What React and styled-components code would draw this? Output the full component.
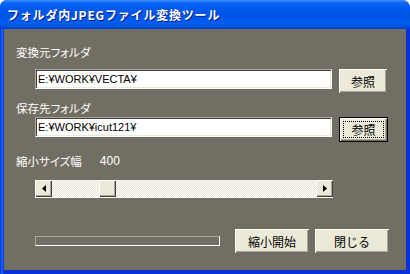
import React from 'react';
import styled, { createGlobalStyle } from 'styled-components';

const GlobalStyle = createGlobalStyle`
  html, body {
    margin: 0;
    padding: 0;
    background: #ffffff;
  }
`;

const jp = `'Noto Sans CJK JP', 'Noto Sans', sans-serif`;

const Window = styled.div`
  width: 410px;
  height: 274px;
  display: flex;
  flex-direction: column;
  box-sizing: border-box;
  background: #0831d9;
  border-radius: 7px 8px 0 0;
  overflow: hidden;
`;

const TitleBar = styled.div`
  height: 29px;
  flex: none;
  display: flex;
  align-items: center;
  padding-left: 7px;
  box-sizing: border-box;
  background: linear-gradient(
    to bottom,
    #3d8fff 0%,
    #0a66f8 10%,
    #005af0 25%,
    #0055e6 55%,
    #005ef4 80%,
    #0050de 92%,
    #003cc0 100%
  );
`;

const Title = styled.span`
  font-family: ${jp};
  font-size: 12px;
  font-weight: 700;
  color: #ffffff;
  text-shadow: 1px 1px 0 #0a1e8a;
  letter-spacing: 0.8px;
`;

const Frame = styled.div`
  flex: 1;
  display: flex;
  padding: 0 4px 4px 4px;
  background: linear-gradient(to right, #0831d9, #166aee 2px, #0831d9 4px);
`;

const Client = styled.div`
  flex: 1;
  display: flex;
  flex-direction: column;
  background: #716f64;
  padding-left: 12px;
`;

const Label = styled.div`
  margin-top: ${(p) => p.$top}px;
  height: 16px;
  display: flex;
  align-items: center;
  gap: 18px;
  font-family: ${jp};
  font-feature-settings: 'palt';
  font-size: 11.5px;
  color: #ffffff;
`;

const Value = styled.span`
  font-family: 'Liberation Sans', sans-serif;
  font-size: 12px;
`;

const FieldRow = styled.div`
  margin-top: ${(p) => p.$top}px;
  margin-left: 19px;
  display: flex;
  align-items: flex-start;
  gap: 7px;
`;

const TextBox = styled.div`
  width: 297px;
  height: 20px;
  box-sizing: border-box;
  background: #ffffff;
  border: 1px solid;
  border-color: #aca899 #ffffff #ffffff #aca899;
  box-shadow: inset 1px 1px 0 #404040, inset -1px -1px 0 #ece9d8;
  padding: 0 0 0 2px;
  display: flex;
  align-items: center;
  font-family: 'Liberation Sans', sans-serif;
  font-size: 11px;
  color: #000000;
`;

const Button = styled.button`
  width: ${(p) => p.$w}px;
  height: ${(p) => (p.$focused ? 25 : 24)}px;
  box-sizing: border-box;
  margin: 0;
  padding: 0;
  background: #ece9d8;
  border: ${(p) => (p.$focused ? '1px solid #000000' : 'none')};
  box-shadow: inset 1px 1px 0 #ffffff, inset -1px -1px 0 #716f64,
    inset -2px -2px 0 #aca899;
  font-family: ${jp};
  font-size: 12px;
  color: #000000;
  display: flex;
  align-items: center;
  justify-content: center;
  position: relative;
`;

const FocusRing = styled.span`
  position: absolute;
  inset: 3px;
  border: 1px dotted #000000;
`;

const ScrollBar = styled.div`
  margin-top: 11px;
  margin-left: 19px;
  width: 298px;
  height: 17px;
  display: flex;
  border-bottom: 1px solid #ffffff;
  background: repeating-conic-gradient(#ffffff 0 25%, #e4e1d2 0 50%) 0 0 / 2px 2px;
`;

const ScrollButton = styled.div`
  width: 17px;
  height: 17px;
  flex: none;
  box-sizing: border-box;
  background: #ece9d8;
  box-shadow: inset 1px 1px 0 #ffffff, inset -1px -1px 0 #404040,
    inset -2px -2px 0 #aca899;
  display: flex;
  align-items: center;
  justify-content: center;
`;

const Track = styled.div`
  flex: 1;
  display: flex;
`;

const Thumb = styled(ScrollButton)`
  margin-left: ${(p) => p.$offset}px;
`;

const BottomRow = styled.div`
  margin-top: 31px;
  margin-left: 19px;
  display: flex;
  align-items: center;
  gap: 6px;
`;

const Progress = styled.div`
  width: 185px;
  height: 10px;
  box-sizing: border-box;
  margin-right: 9px;
  border: 1px solid;
  border-color: #aca899 #ffffff #ffffff #aca899;
`;

const Arrow = ({ dir }) => (
  <svg width="4" height="7" viewBox="0 0 4 7">
    {dir === 'left' ? (
      <polygon points="4,0 4,7 0,3.5" fill="#000" />
    ) : (
      <polygon points="0,0 0,7 4,3.5" fill="#000" />
    )}
  </svg>
);

export default function App() {
  return (
    <>
      <GlobalStyle />
      <Window>
        <TitleBar>
          <Title>フォルダ内JPEGファイル変換ツール</Title>
        </TitleBar>
        <Frame>
          <Client>
            <Label $top={15}>変換元フォルダ</Label>
            <FieldRow $top={9}>
              <TextBox>E:¥WORK¥VECTA¥</TextBox>
              <Button $w={48}>参照</Button>
            </FieldRow>
            <Label $top={7}>保存先フォルダ</Label>
            <FieldRow $top={1}>
              <TextBox>E:¥WORK¥icut121¥</TextBox>
              <Button $w={49} $focused>
                <FocusRing />
                参照
              </Button>
            </FieldRow>
            <Label $top={11}>
              縮小サイズ幅<Value>400</Value>
            </Label>
            <ScrollBar>
              <ScrollButton>
                <Arrow dir="left" />
              </ScrollButton>
              <Track>
                <Thumb $offset={47} />
              </Track>
              <ScrollButton>
                <Arrow dir="right" />
              </ScrollButton>
            </ScrollBar>
            <BottomRow>
              <Progress />
              <Button $w={74}>縮小開始</Button>
              <Button $w={74}>閉じる</Button>
            </BottomRow>
          </Client>
        </Frame>
      </Window>
    </>
  );
}
